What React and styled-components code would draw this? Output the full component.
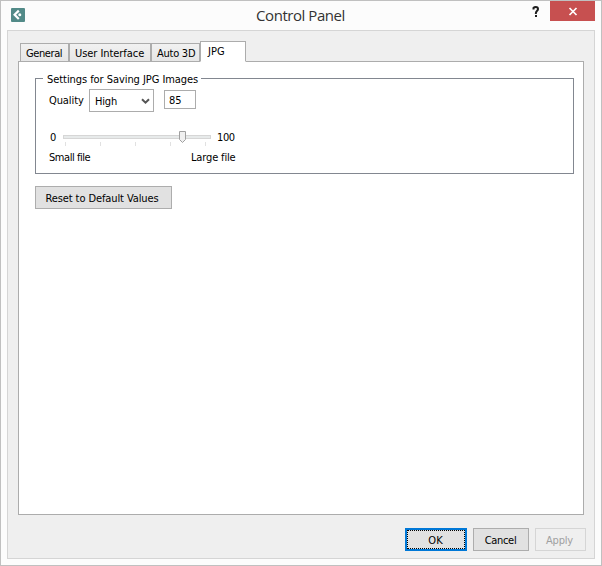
import React, { Component } from 'react';
import styled, { createGlobalStyle } from 'styled-components';

const GlobalStyle = createGlobalStyle`
body{
  margin: 0;
  background: #fcfcfc;
}
*{
  box-sizing: border-box;
}
button, input{
  font: inherit;
  margin: 0;
  border-radius: 0;
  outline: none;
}
`;

const Window = styled.div`
width: 602px;
height: 566px;
border: 1px solid #c0c0c0;
background: #fcfcfc;
padding: 0 6px 6px;
display: flex;
flex-direction: column;
font-family: "DejaVu Sans Condensed", "DejaVu Sans", sans-serif;
font-stretch: condensed;
font-size: 11px;
line-height: 14px;
color: #000;
white-space: nowrap;
`;

const TitleBar = styled.div`
display: grid;
grid-template-columns: 88px 1fr 88px;
height: 29px;
flex: none;

.logo{
  margin: 7px 0 0 4px;
}
`;

const Title = styled.div`
font-family: "Open Sans", "Noto Sans", sans-serif;
font-stretch: normal;
font-size: 15px;
line-height: 20px;
letter-spacing: -0.45px;
padding: 4px 1px 0 0;
text-align: center;
color: #333;
`;

const WindowButtons = styled.div`
display: flex;
justify-content: flex-end;

.help{
  margin: 5px 10px 0 0;
}
.close{
  width: 45px;
  height: 20px;
  background: #c75050;
  border: 0;
  padding: 0;
  display: block;
}
.close svg{
  display: block;
}
`;

const Frame = styled.div`
width: 588px;
height: 529px;
border: 1px solid #d5d5d5;
background: #efefef;
padding: 10px 10px 0;
flex: none;
`;

const Tabs = styled.div`
display: flex;
align-items: flex-end;
height: 21px;
padding-left: 2px;
margin-bottom: -1px;
`;

const Tab = styled.div`
position: relative;
width: ${props => props.$width}px;
height: ${props => (props.$active ? 21 : 19)}px;
border: 1px solid #acacac;
border-bottom-color: ${props => (props.$active ? '#fff' : '#acacac')};
background: ${props => (props.$active ? '#fff' : 'linear-gradient(#f1f1f1, #e6e6e6)')};
padding: 3px 0 0 ${props => props.$indent}px;
`;

const Text = styled.span`
display: inline-block;
letter-spacing: ${props => props.$spacing || 0}px;
`;

const Page = styled.div`
height: 454px;
border: 1px solid #acacac;
background: #fff;
padding: 9px 9px 0 16px;
`;

const Group = styled.fieldset`
height: 103px;
margin: 0 0 12px;
padding: 4px 0 0 13px;
border: 1px solid #828790;
min-width: 0;

legend{
  margin-left: -6px;
  padding: 2px 3px 0 4px;
  height: 14px;
}
`;

const Row = styled.div`
display: flex;
align-items: flex-start;
height: ${props => props.$height}px;
`;

const Label = styled.div`
width: ${props => props.$width}px;
padding-top: ${props => props.$top || 0}px;
padding-left: ${props => props.$left || 0}px;
`;

const Select = styled.div`
width: 65px;
height: 23px;
border: 1px solid #acacac;
padding: 5px 3px 0 5px;
display: flex;
justify-content: space-between;

svg{
  margin-top: 3px;
}
`;

const NumberBox = styled.input`
width: 32px;
height: 19px;
margin: 1px 0 0 10px;
border: 1px solid #acacac;
padding: 1px 0 0 4px;
`;

const Button = styled.button`
width: ${props => props.$width}px;
height: 23px;
padding: 1px ${props => props.$shift || 0}px 0 0;
border: 1px solid #adadad;
background: #e1e1e1;
color: #000;
line-height: 19px;

&.default{
  border: 2px solid #0078d7;
  outline: 1px dotted #000;
  outline-offset: -3px;
}
&:disabled{
  border-color: #d5d5d5;
  background: #efefef;
  color: #a0a0a0;
}
`;

const Footer = styled.div`
display: flex;
justify-content: flex-end;
margin: 13px -2px 0 0;

button + button{
  margin-left: 6px;
}
`;

const Slider = ({ value }) => (
  <svg width="149" height="17" viewBox="0 0 149 17" shapeRendering="crispEdges">
    <rect x="0.5" y="5.5" width="147" height="3" fill="#e7eaea" stroke="#d6d6d6" />
    {[2, 37, 72, 107, 142].map(x => (
      <rect key={x} x={x} y="12" width="1" height="4" fill="#e1e1e1" />
    ))}
    <path
      d="M0.5 1.5h6v8l-3 3l-3-3z"
      transform={`translate(${Math.round(value * 1.37)} 0)`}
      fill="#f0f0f0"
      stroke="#a0a0a0"
      shapeRendering="auto"
    />
  </svg>
);

const tabs = [
  { name: 'General', width: 49, indent: 5, spacing: -0.4 },
  { name: 'User Interface', width: 82, indent: 5, spacing: -0.06 },
  { name: 'Auto 3D', width: 49, indent: 5, spacing: -0.25 },
  { name: 'JPG', width: 46, indent: 7, spacing: 0 },
];

class App extends Component {
  constructor(props) {
    super(props);
    this.state = {
      quality: 85,
      tab: 'JPG',
    };
  }

  handleChange = (e) => {
    this.setState({ quality: e.target.value });
  }

  render() {
    const { quality, tab } = this.state;
    return (
      <Window>
        <GlobalStyle />
        <TitleBar>
          <svg className="logo" width="14" height="14" viewBox="0 0 14 14">
            <rect width="14" height="14" rx="1" fill="#528a88" />
            <path d="M7.8 2.6L3.6 6.8L7.8 11" fill="none" stroke="#fff" strokeWidth="2.2" />
            <circle cx="8.8" cy="6.8" r="1.5" fill="#fff" />
          </svg>
          <Title>Control Panel</Title>
          <WindowButtons>
            <svg className="help" width="8" height="12" viewBox="0 0 8 12">
              <path d="M1.5 3.5V1.8Q2.2 1 3.8 1Q6 1 6 3Q6 4 4.9 5Q3.8 6 3.8 8" fill="none" stroke="#1e1e1e" strokeWidth="2" />
              <rect x="3" y="9" width="2" height="2" fill="#1e1e1e" />
            </svg>
            <button className="close">
              <svg width="45" height="20" viewBox="0 0 45 20">
                <path d="M19.5 7L26.5 14M26.5 7L19.5 14" stroke="#fff" strokeWidth="1.7" />
              </svg>
            </button>
          </WindowButtons>
        </TitleBar>
        <Frame>
          <Tabs>
            {tabs.map(t => (
              <Tab key={t.name} $width={t.width} $indent={t.indent} $active={t.name === tab}>
                <Text $spacing={t.spacing}>{t.name}</Text>
              </Tab>
            ))}
          </Tabs>
          <Page>
            <Group>
              <legend><Text $spacing={-0.06}>Settings for Saving JPG Images</Text></legend>
              <Row $height={41}>
                <Label $width={40} $top={5}><Text $spacing={-0.1}>Quality</Text></Label>
                <Select>
                  <Text $spacing={-0.2}>High</Text>
                  <svg width="9" height="7" viewBox="0 0 9 7">
                    <path d="M1 1.2L4.5 4.7L8 1.2" fill="none" stroke="#555" strokeWidth="2" />
                  </svg>
                </Select>
                <NumberBox value={quality} onChange={this.handleChange} />
              </Row>
              <Row $height={20}>
                <Label $width={14} $top={1} $left={1}><Text>0</Text></Label>
                <Slider value={quality} />
                <Label $width={30} $top={1} $left={5}><Text $spacing={-0.4}>100</Text></Label>
              </Row>
              <Row $height={14}>
                <Label $width={142} $top={1}><Text $spacing={-0.45}>Small file</Text></Label>
                <Label $width={50} $top={1}><Text $spacing={-0.15}>Large file</Text></Label>
              </Row>
            </Group>
            <Row $height={35}>
              <Button $width={137} $shift={3}><Text $spacing={-0.1}>Reset to Default Values</Text></Button>
            </Row>
          </Page>
          <Footer>
            <Button className="default" $width={62} $shift={1}><Text>OK</Text></Button>
            <Button $width={56} $shift={1}><Text $spacing={-0.3}>Cancel</Text></Button>
            <Button $width={51} $shift={2} disabled><Text $spacing={-0.2}>Apply</Text></Button>
          </Footer>
        </Frame>
      </Window>
    );
  }
}

export default App;
